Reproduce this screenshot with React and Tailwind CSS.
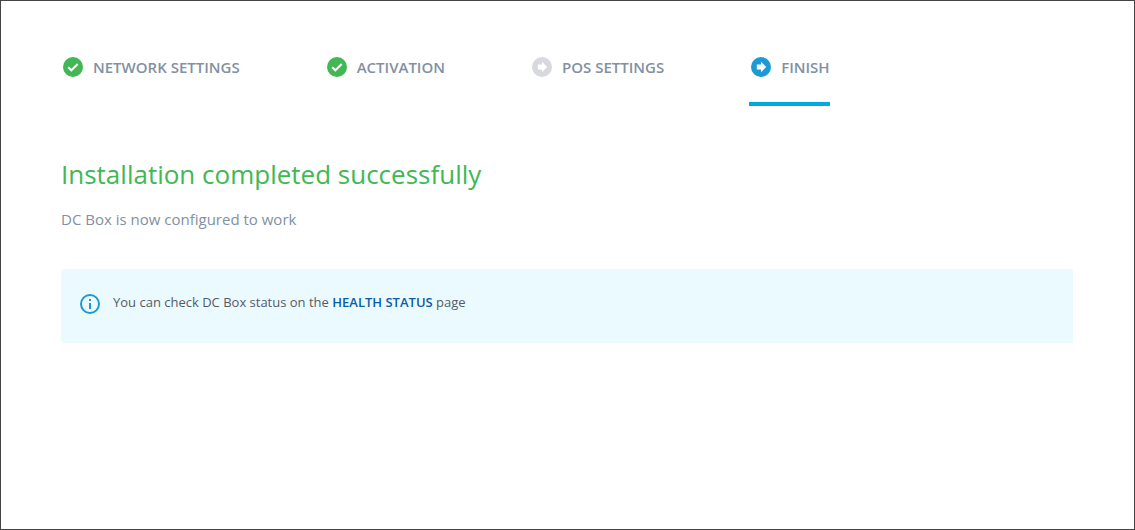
const steps = [
    { name: "Network settings", status: "done" },
    { name: "Activation", status: "done" },
    { name: "POS settings", status: "skipped" },
    { name: "Finish", status: "current" },
]

const CheckIcon = () => (
    <svg viewBox="0 0 20 20" className="size-5 shrink-0" aria-hidden="true">
        <circle cx="10" cy="10" r="10" fill="#41B853" />
        <path d="M5.2 10.2l3.2 3.1 6.3-6.3" fill="none" stroke="#FFFFFF" strokeWidth="2" />
    </svg>
)

const ArrowIcon = ({ color }) => (
    <svg viewBox="0 0 20 20" className="size-5 shrink-0" aria-hidden="true">
        <circle cx="10" cy="10" r="10" fill={color} />
        <path d="M5.8 7.6h4.2V4.8l5.2 5.2-5.2 5.2V12.4H5.8z" fill="#FFFFFF" />
    </svg>
)

const InfoIcon = () => (
    <svg viewBox="0 0 20 20" className="size-5 shrink-0" aria-hidden="true">
        <circle cx="10" cy="10" r="9" fill="none" stroke="#1C9AD6" strokeWidth="2" />
        <path d="M9 5h2v2H9zM9 9h2v6H9z" fill="#1C9AD6" />
    </svg>
)

const Step = ({ name, status }) => {
    const current = status === "current"

    return (
        <li>
            <button
                type="button"
                aria-current={current ? "step" : undefined}
                className={`flex items-center gap-2.5 border-b-4 pb-[23px] pl-0.5 text-[15px] leading-6 font-semibold whitespace-nowrap text-[#8290A3] uppercase ${current ? "border-[#00A9DF]" : "border-transparent"}`}
            >
                {status === "done" ? <CheckIcon /> : <ArrowIcon color={current ? "#1C9AD6" : "#D7D9DE"} />}
                {name}
            </button>
        </li>
    )
}

const App = () => {
    return (
        <main className="min-h-screen border border-[#444444] bg-white pt-[54px] pr-[61px] pb-10 pl-15 font-['Open_Sans',sans-serif]">
            <nav aria-label="Setup steps">
                <ol className="flex flex-wrap gap-x-[85px] gap-y-4">
                    {steps.map((step) => (
                        <Step key={step.name} {...step} />
                    ))}
                </ol>
            </nav>

            <h1 className="mt-12 text-[26px] leading-10 text-[#41B853]">Installation completed successfully</h1>
            <p className="mt-[13px] text-[15px] leading-6 text-[#8290A3]">DC Box is now configured to work</p>

            <div className="mt-[38px] flex gap-[13px] rounded-l bg-[#EBFAFF] px-[19px] pt-[25px] pb-[29px]">
                <InfoIcon />
                <p className="text-[13px] leading-4 text-[#555B66]">
                    You can check DC Box status on the{" "}
                    <a href="#health-status" className="font-semibold text-[#0D5CA6] uppercase">Health status</a> page
                </p>
            </div>
        </main>
    )
}

export default App
